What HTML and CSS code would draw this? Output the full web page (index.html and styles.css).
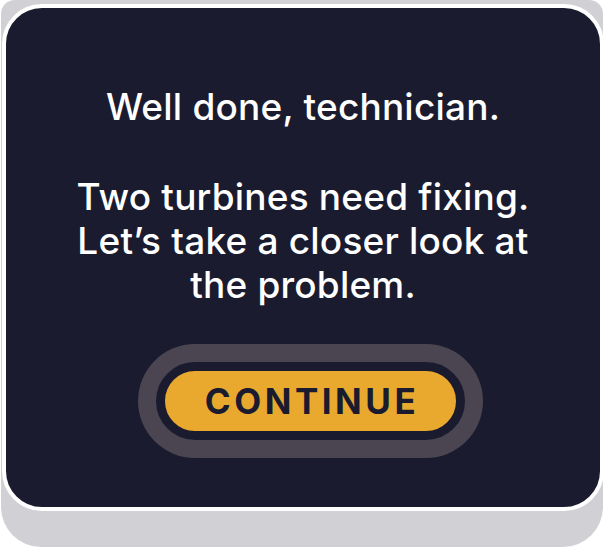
FILE: index.html
```html
<!DOCTYPE html>
<html>
<head>
<meta charset="utf-8">
<link rel="stylesheet" href="styles.css">
</head>
<body>
<div class="frame">
  <div class="card">
    <p class="msg">Well done, technician.</p>
    <p class="msg msg-gap">Two turbines need fixing.<br>Let’s take a closer look at<br>the problem.</p>
    <div class="actions">
      <div class="btn-ring">
        <button class="btn">CONTINUE</button>
      </div>
    </div>
  </div>
</div>
</body>
</html>
```
FILE: styles.css
```css
html, body {
  margin: 0;
  padding: 0;
  background: #ffffff;
}
.frame {
  position: relative;
  width: 606px;
  height: 548px;
  box-sizing: border-box;
  padding: 4px 2px 0 2px;
}
.frame::before {
  content: "";
  position: absolute;
  left: 1px;
  right: 3px;
  top: 0;
  bottom: 1px;
  background: #d1d0d5;
  border-radius: 14px 14px 40px 40px;
}
.card {
  position: relative;
  box-sizing: border-box;
  width: 602px;
  height: 507px;
  background: #1a1b2e;
  border: 4px solid #ffffff;
  border-radius: 40px;
  display: flex;
  flex-direction: column;
  align-items: center;
  padding-top: 77px;
  font-family: "Inter", "Open Sans", sans-serif;
  color: #ffffff;
}
.msg {
  margin: 0;
  font-size: 37px;
  font-weight: 500;
  letter-spacing: 0.2px;
  line-height: 44px;
  text-align: center;
}
.msg-gap {
  margin-top: 46px;
}
.actions {
  margin-top: 37px;
  display: flex;
  justify-content: center;
  width: 100%;
  padding-left: 14px;
  box-sizing: border-box;
}
.btn-ring {
  background: #4a4551;
  border-radius: 60px;
  padding: 18px;
}
.btn {
  display: block;
  width: 309px;
  height: 78px;
  box-sizing: border-box;
  border: 9px solid #1a1b2e;
  background: #e9a92f;
  border-radius: 40px;
  font-family: "Inter", "Open Sans", sans-serif;
  font-size: 35px;
  font-weight: 700;
  letter-spacing: 3.5px;
  color: #1a1b2e;
  padding: 0 0 0 4px;
  line-height: 60px;
  text-align: center;
}
```
